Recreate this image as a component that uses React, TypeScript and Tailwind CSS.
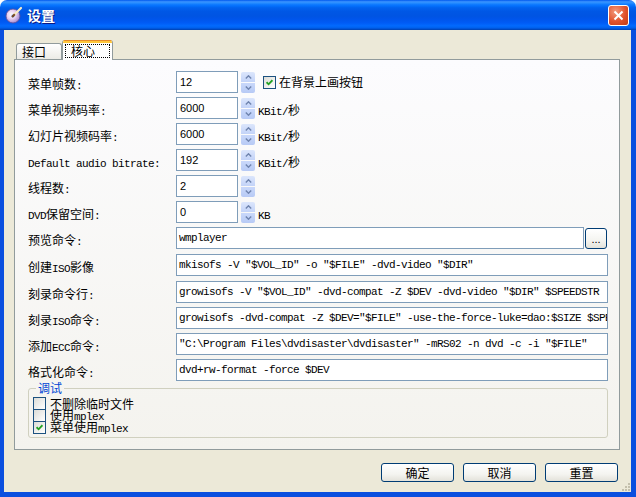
import React from 'react';

const CJK = /[\u2E80-\u9FFF\u3000-\u303F\uFF00-\uFFEF]/;

// SimSun-like mix: CJK at 12px, latin half-width (6px advance)
const Txt = ({ text }: { text: string }) => (
  <>
    {text
      .split(/([\u2E80-\u9FFF\u3000-\u303F\uFF00-\uFFEF]+)/)
      .filter(Boolean)
      .map((s, i) =>
        CJK.test(s) ? (
          <span key={i} className="font-['Noto_Sans_CJK_SC',sans-serif] text-[12px]">
            {s}
          </span>
        ) : (
          <span key={i} className="whitespace-pre font-['Liberation_Mono',monospace] text-[11px] tracking-[-0.6px]">
            {s}
          </span>
        )
      )}
  </>
);

const Spinner = () => (
  <div className="ml-[3px] flex h-[21px] w-[14px] shrink-0 flex-col gap-px">
    <div className="flex flex-1 items-center justify-center rounded-t-[2px] bg-[linear-gradient(180deg,#DCE6FC,#C3D3F8)]">
      <svg width="7" height="4" viewBox="0 0 7 4">
        <path d="M0.8 3.5 L3.5 0.8 L6.2 3.5" fill="none" stroke="#6F84AE" strokeWidth="1.4" />
      </svg>
    </div>
    <div className="flex flex-1 items-center justify-center rounded-b-[2px] bg-[linear-gradient(180deg,#C9D8FA,#B7CAF5)]">
      <svg width="7" height="4" viewBox="0 0 7 4">
        <path d="M0.8 0.5 L3.5 3.2 L6.2 0.5" fill="none" stroke="#6F84AE" strokeWidth="1.4" />
      </svg>
    </div>
  </div>
);

const Check = ({ checked }: { checked?: boolean }) => (
  <div className="flex h-[13px] w-[13px] shrink-0 items-center justify-center border border-[#1C5180] bg-[linear-gradient(135deg,#DCDCD7,#FFFFFF)]">
    {checked && (
      <svg width="7" height="7" viewBox="0 0 7 7">
        <path d="M0.6 3.2 L2.6 5.3 L6.4 1.2" fill="none" stroke="#21A121" strokeWidth="1.8" />
      </svg>
    )}
  </div>
);

const XpButton = ({ label }: { label: string }) => (
  <div className="flex h-[19px] w-[73px] items-center justify-center rounded-[3px] border border-[#003C74] bg-[linear-gradient(180deg,#FFFFFF_0%,#F4F4F0_60%,#E3E2DA_100%)] text-black">
    <Txt text={label} />
  </div>
);

type SpinRowData = { label: string; value: string; unit?: string; check?: string };

const spinRows: SpinRowData[] = [
  { label: '菜单帧数:', value: '12', check: '在背景上画按钮' },
  { label: '菜单视频码率:', value: '6000', unit: 'KBit/秒' },
  { label: '幻灯片视频码率:', value: '6000', unit: 'KBit/秒' },
  { label: 'Default audio bitrate:', value: '192', unit: 'KBit/秒' },
  { label: '线程数:', value: '2' },
  { label: 'DVD保留空间:', value: '0', unit: 'KB' },
];

const cmdRows = [
  { label: '创建ISO影像', value: 'mkisofs -V "$VOL_ID" -o "$FILE" -dvd-video "$DIR"', mt: 'mt-[5px]' },
  { label: '刻录命令行:', value: 'growisofs -V "$VOL_ID" -dvd-compat -Z $DEV -dvd-video "$DIR" $SPEEDSTR', mt: 'mt-[5px]' },
  { label: '刻录ISO命令:', value: 'growisofs -dvd-compat -Z $DEV="$FILE" -use-the-force-luke=dao:$SIZE $SPEEDSTR', mt: 'mt-[4px]' },
  { label: '添加ECC命令:', value: '"C:\\Program Files\\dvdisaster\\dvdisaster" -mRS02 -n dvd -c -i "$FILE"', mt: 'mt-[4px]' },
  { label: '格式化命令:', value: 'dvd+rw-format -force $DEV', mt: 'mt-[4px]' },
];

const TitleIcon = () => (
  <svg width="18" height="18" viewBox="0 0 18 18">
    <defs>
      <radialGradient id="disc" cx="40%" cy="40%" r="65%">
        <stop offset="0" stopColor="#FFFFFF" />
        <stop offset="0.45" stopColor="#EBD3F2" />
        <stop offset="1" stopColor="#9C80CC" />
      </radialGradient>
    </defs>
    <circle cx="8" cy="10" r="7" fill="url(#disc)" stroke="#5E4E96" strokeWidth="0.8" />
    <circle cx="8" cy="10" r="1.8" fill="#3A63D8" stroke="#FFFFFF" strokeWidth="0.6" />
    <path d="M9.5 8.5 L16 2" stroke="#F6EBC4" strokeWidth="2.2" strokeLinecap="round" />
    <path d="M7 11 L9.8 8.2" stroke="#7A4A20" strokeWidth="2" />
  </svg>
);

export default function App() {
  return (
    <div className="flex h-[497px] w-[636px] flex-col overflow-hidden bg-white font-['Noto_Sans_CJK_SC',sans-serif] text-black">
      {/* title bar */}
      <div className="flex h-[30px] shrink-0 items-center rounded-t-[7px] bg-[linear-gradient(180deg,#0058EE_0%,#3A93FF_6%,#288EFF_10%,#127DFF_14%,#036FFC_20%,#0262EE_26%,#0057E5_38%,#0054E3_54%,#0055EB_64%,#005BF5_76%,#026AFE_86%,#0062EF_92%,#0052D6_96%,#0040AB_100%)] pl-[5px] pr-[7px]">
        <TitleIcon />
        <span className="ml-[4px] text-[14px] font-bold text-white [text-shadow:1px_1px_0_#0A1883]">设置</span>
        <div className="ml-auto flex h-[21px] w-[21px] items-center justify-center rounded-[3px] border border-white bg-[radial-gradient(circle_at_35%_30%,#F39A7E,#E0522C_55%,#C23B14)]">
          <svg width="11" height="11" viewBox="0 0 11 11">
            <path d="M1.5 1.5 L9.5 9.5 M9.5 1.5 L1.5 9.5" stroke="#FFFFFF" strokeWidth="2" />
          </svg>
        </div>
      </div>

      {/* window body */}
      <div className="relative flex flex-1 flex-col border-b-[5px] border-l-[4px] border-r-[5px] border-[#0A4FDF] bg-[#ECE9D8] pl-[10px] pt-[10px]">
        {/* tabs */}
        <div className="relative z-10 flex h-[19px] items-end pl-[2px]">
          <div className="flex h-[16px] w-[46px] items-center rounded-t-[3px] border border-b-0 border-[#919B9C] bg-[linear-gradient(180deg,#FFFFFF,#ECEBE6)] pl-[5px] pt-[1px]">
            <Txt text="接口" />
          </div>
          <div className="-mb-px flex h-[20px] w-[51px] flex-col overflow-hidden rounded-t-[3px] border-x border-[#919B9C] bg-white">
            <div className="h-[3px] shrink-0 border-t border-[#E68B2C] bg-[#FFC73C]" />
            <div className="mx-[2px] mt-[1px] flex h-[14px] items-center border border-dotted border-black pl-[5px]">
              <Txt text="核心" />
            </div>
          </div>
        </div>

        {/* panel */}
        <div className="h-[391px] w-[606px] border border-[#919B9C] bg-[linear-gradient(180deg,#FCFCFE,#F4F3EE)] pl-[13px] pt-[11px]">
          {spinRows.map((r, i) => (
            <div key={r.label} className={`flex h-[22px] items-center ${i === 0 ? '' : 'mt-[4px]'}`}>
              <div className="w-[148px] shrink-0">
                <Txt text={r.label} />
              </div>
              <div className="flex h-[22px] w-[62px] shrink-0 items-center border border-[#7F9DB9] bg-white pl-[3px] font-['Liberation_Sans',sans-serif] text-[11px]">
                {r.value}
              </div>
              <Spinner />
              {r.unit && (
                <div className="ml-[3px]">
                  <Txt text={r.unit} />
                </div>
              )}
              {r.check && (
                <div className="ml-[8px] flex items-center gap-[3px]">
                  <Check checked />
                  <Txt text={r.check} />
                </div>
              )}
            </div>
          ))}

          <div className="mt-[4px] flex h-[22px] items-center">
            <div className="w-[148px] shrink-0">
              <Txt text="预览命令:" />
            </div>
            <div className="flex h-[22px] w-[408px] items-center overflow-hidden whitespace-nowrap border border-[#7F9DB9] bg-white pl-[2px]">
              <Txt text="wmplayer" />
            </div>
            <div className="ml-px flex h-[21px] w-[22px] items-end justify-center rounded-[3px] border border-[#003C74] bg-[linear-gradient(180deg,#FFFFFF_0%,#F4F4F0_60%,#E3E2DA_100%)] pb-[3px] font-['Liberation_Sans',sans-serif] text-[11px] leading-[11px]">
              ...
            </div>
          </div>

          {cmdRows.map((r) => (
            <div key={r.label} className={`flex h-[22px] items-center ${r.mt}`}>
              <div className="w-[148px] shrink-0">
                <Txt text={r.label} />
              </div>
              <div className="flex h-[22px] w-[432px] items-center overflow-hidden whitespace-nowrap border border-[#7F9DB9] bg-white pl-[2px]">
                <Txt text={r.value} />
              </div>
            </div>
          ))}

          <fieldset className="w-[580px] rounded-[3px] border border-[#D0D0BF] px-[4px] pb-[4px] pt-[2px]">
            <legend className="ml-[3px] px-[2px] text-[12px] leading-[14px] text-[#0046D5]">调试</legend>
            {[
              { t: '不删除临时文件', c: false },
              { t: '使用mplex', c: false },
              { t: '菜单使用mplex', c: true },
            ].map((c) => (
              <div key={c.t} className="flex h-[12px] items-center gap-[4px] leading-[12px]">
                <Check checked={c.c} />
                <span className="leading-[12px]">
                  <Txt text={c.t} />
                </span>
              </div>
            ))}
          </fieldset>
        </div>

        {/* buttons */}
        <div className="mt-[13px] flex w-[606px] justify-end gap-[9px] pr-[2px]">
          <XpButton label="确定" />
          <XpButton label="取消" />
          <XpButton label="重置" />
        </div>

        {/* resize grip */}
        <svg className="absolute bottom-[1px] right-[1px]" width="10" height="10" viewBox="0 0 10 10">
          {[
            [8, 2],
            [5, 5],
            [8, 5],
            [2, 8],
            [5, 8],
            [8, 8],
          ].map(([x, y]) => (
            <rect key={`${x}-${y}`} x={x} y={y} width="2" height="2" fill="#C3BFAC" />
          ))}
        </svg>
      </div>
    </div>
  );
}
